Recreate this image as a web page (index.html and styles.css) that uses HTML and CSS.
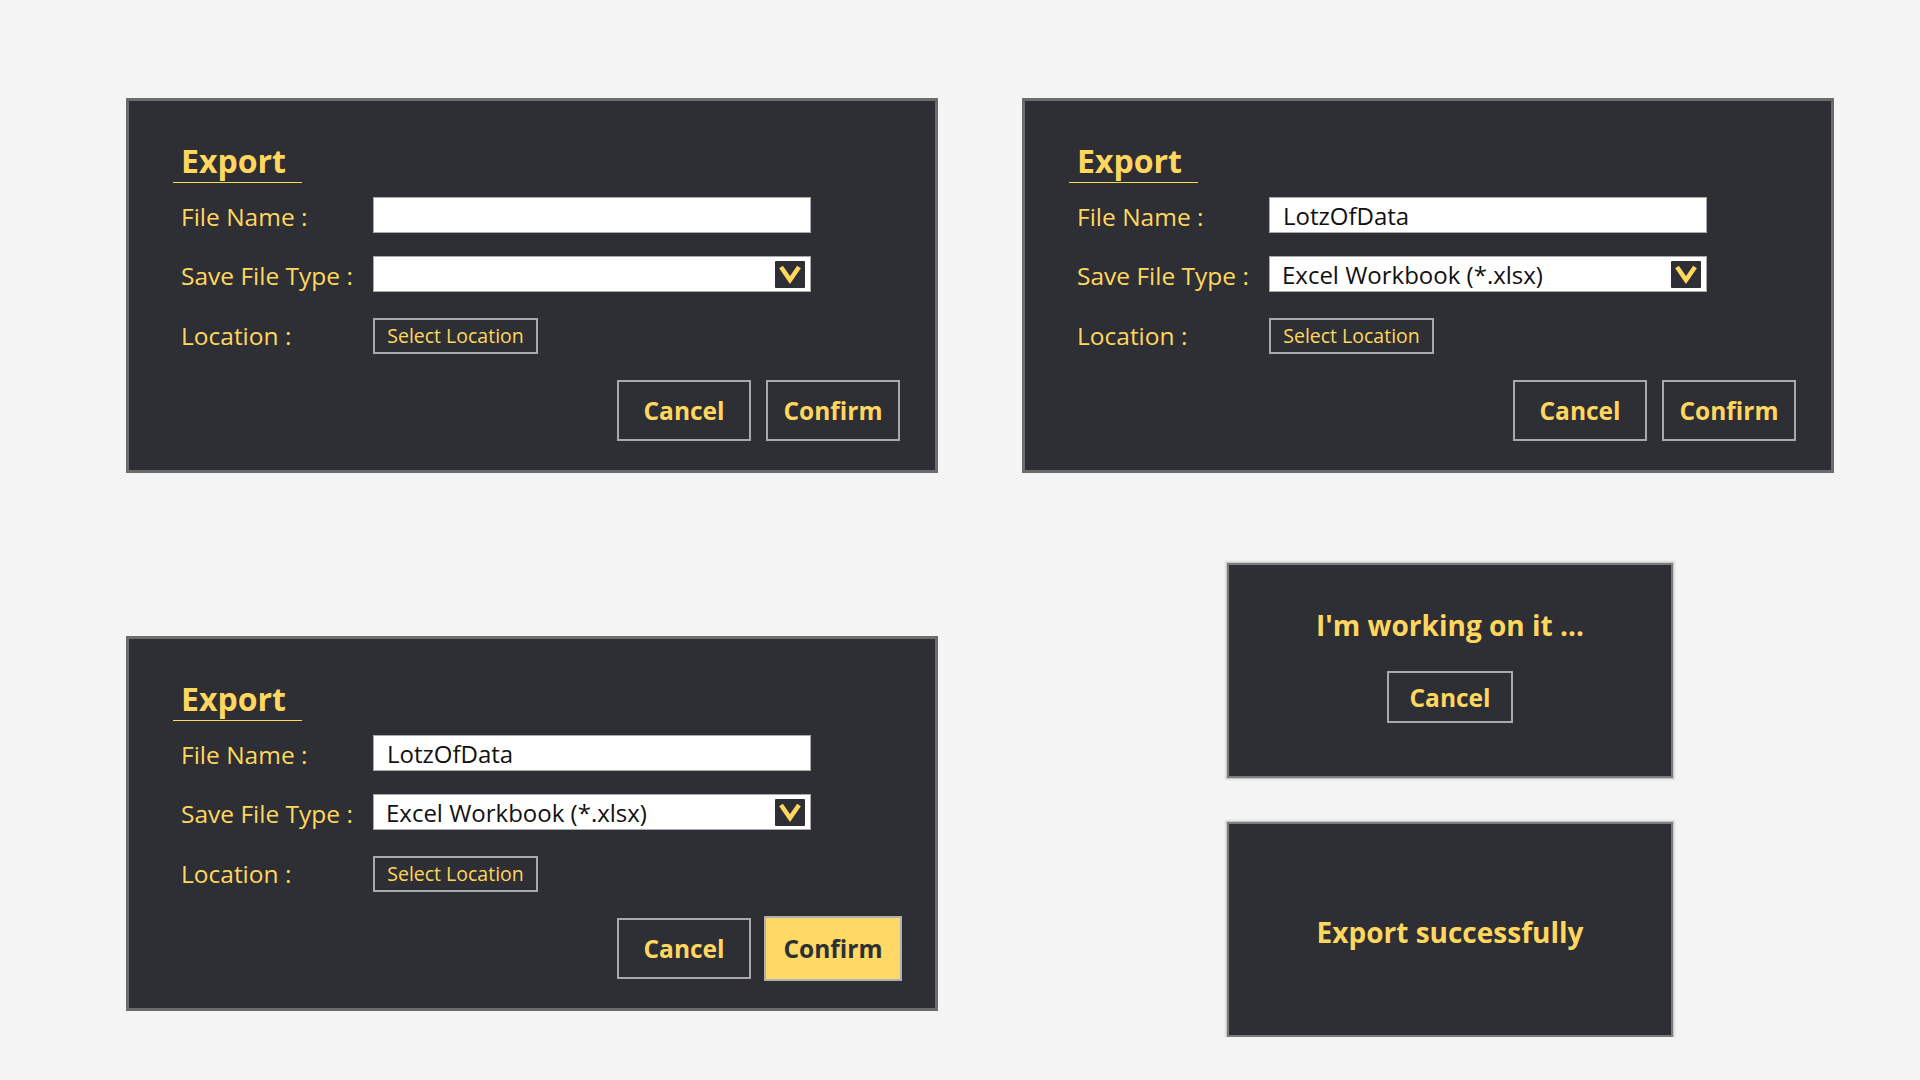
FILE: index.html
```html
<!DOCTYPE html>
<html>
<head>
<meta charset="utf-8">
<link rel="stylesheet" href="styles.css">
</head>
<body>
<div class="page">
  <div class="dialog">
    <div class="title">Export</div>
    <div class="row row-name">
      <span class="label">File Name :</span>
      <div class="field"></div>
    </div>
    <div class="row row-type">
      <span class="label">Save File Type :</span>
      <div class="field select">
        <span class="value"></span>
        <span class="arrow"><svg width="30" height="27" viewBox="0 0 30 27"><polyline points="6,6 15,19 24,6" fill="none" stroke="#ffd75f" stroke-width="4.5"/></svg></span>
      </div>
    </div>
    <div class="row row-loc">
      <span class="label">Location :</span>
      <div class="loc-btn">Select Location</div>
    </div>
    <div class="actions">
      <div class="btn">Cancel</div>
      <div class="btn">Confirm</div>
    </div>
  </div>

  <div class="dialog">
    <div class="title">Export</div>
    <div class="row row-name">
      <span class="label">File Name :</span>
      <div class="field"><span class="value">LotzOfData</span></div>
    </div>
    <div class="row row-type">
      <span class="label">Save File Type :</span>
      <div class="field select">
        <span class="value">Excel Workbook (*.xlsx)</span>
        <span class="arrow"><svg width="30" height="27" viewBox="0 0 30 27"><polyline points="6,6 15,19 24,6" fill="none" stroke="#ffd75f" stroke-width="4.5"/></svg></span>
      </div>
    </div>
    <div class="row row-loc">
      <span class="label">Location :</span>
      <div class="loc-btn">Select Location</div>
    </div>
    <div class="actions">
      <div class="btn">Cancel</div>
      <div class="btn">Confirm</div>
    </div>
  </div>

  <div class="dialog dialog-low">
    <div class="title">Export</div>
    <div class="row row-name">
      <span class="label">File Name :</span>
      <div class="field"><span class="value">LotzOfData</span></div>
    </div>
    <div class="row row-type">
      <span class="label">Save File Type :</span>
      <div class="field select">
        <span class="value">Excel Workbook (*.xlsx)</span>
        <span class="arrow"><svg width="30" height="27" viewBox="0 0 30 27"><polyline points="6,6 15,19 24,6" fill="none" stroke="#ffd75f" stroke-width="4.5"/></svg></span>
      </div>
    </div>
    <div class="row row-loc">
      <span class="label">Location :</span>
      <div class="loc-btn">Select Location</div>
    </div>
    <div class="actions">
      <div class="btn">Cancel</div>
      <div class="btn btn-active">Confirm</div>
    </div>
  </div>

  <div class="status-col">
    <div class="status status-working">
      <div class="status-text">I'm working on it ...</div>
      <div class="btn btn-small">Cancel</div>
    </div>
    <div class="status status-done">
      <div class="status-text">Export successfully</div>
    </div>
  </div>
</div>
</body>
</html>
```

FILE: styles.css
```css
* { box-sizing: border-box; }

html, body {
  margin: 0;
  padding: 0;
  background: #f4f4f4;
  font-family: "Open Sans", "Noto Sans", sans-serif;
  color: #ffd75f;
}

.page {
  display: grid;
  grid-template-columns: 812px 812px;
  column-gap: 84px;
  align-items: start;
  padding: 98px 0 0 126px;
}

.dialog {
  width: 812px;
  height: 375px;
  background: #2d2f34;
  border: 3px solid #6c6c6c;
  padding: 39px 35px 27px 44px;
  display: flex;
  flex-direction: column;
}

.dialog-low {
  margin-top: 163px;
}

.title {
  align-self: flex-start;
  width: 129px;
  padding-left: 8px;
  font-size: 32px;
  font-weight: 700;
  line-height: 42px;
  border-bottom: 1px solid #ffd75f;
}

.row {
  display: flex;
  align-items: center;
  padding-left: 8px;
  height: 36px;
}

.row-name { margin-top: 14px; }
.row-type { margin-top: 23px; }
.row-loc { margin-top: 26px; }

.label {
  width: 192px;
  font-size: 24.5px;
  line-height: 36px;
  padding-top: 3px;
}

.row-loc .label { padding-top: 0; }

.field {
  width: 438px;
  height: 36px;
  background: #ffffff;
  border: 1px solid #a9a9a9;
  display: flex;
  align-items: center;
  padding-left: 13px;
  color: #111111;
  font-size: 24px;
}

.select {
  justify-content: space-between;
  padding-left: 12px;
  padding-right: 5px;
}

.value { line-height: 34px; padding-top: 1px; }

.arrow {
  width: 30px;
  height: 27px;
  background: #2d2f34;
  border-radius: 1px;
  display: flex;
}

.loc-btn {
  width: 165px;
  height: 36px;
  border: 2px solid #a9a9a9;
  font-size: 19.5px;
  display: flex;
  align-items: center;
  justify-content: center;
  line-height: 1;
}

.actions {
  margin-top: 26px;
  display: flex;
  justify-content: flex-end;
  gap: 15px;
}

.btn {
  width: 134px;
  height: 61px;
  border: 2px solid #a9a9a9;
  display: flex;
  align-items: center;
  justify-content: center;
  font-size: 24.5px;
  font-weight: 700;
}

.btn-active {
  width: 138px;
  height: 65px;
  margin: -2px -2px -2px -2px;
  background: #ffd966;
  color: #2d2f34;
  border-color: #b0b0b0;
}

.status-col {
  margin-top: 90px;
  margin-left: 205px;
  display: flex;
  flex-direction: column;
  gap: 44px;
}

.status {
  width: 446px;
  height: 215px;
  background: #2d2f34;
  border: 2px solid #7c7c7c;
  box-shadow: 0 0 0 1px #c9c9c9, 0 0 2px 2px #dcdcdc;
  display: flex;
  flex-direction: column;
  align-items: center;
}

.status-working {
  padding-top: 40px;
}

.status-done {
  justify-content: center;
  padding-top: 4px;
}

.status-text {
  font-size: 28px;
  font-weight: 700;
  line-height: 40px;
}

.btn-small {
  width: 126px;
  height: 52px;
  margin-top: 26px;
}
```
